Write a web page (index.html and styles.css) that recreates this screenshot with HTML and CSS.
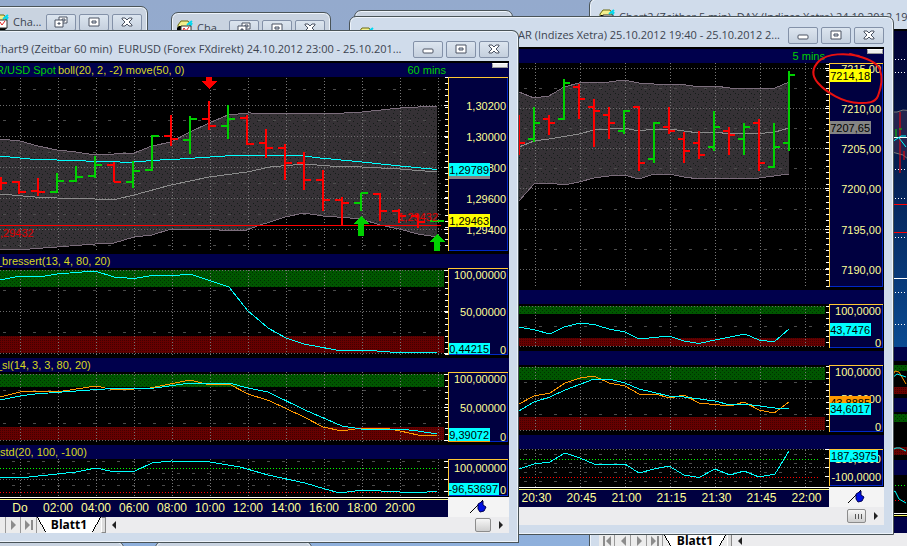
FILE: index.html
```html
<!DOCTYPE html>
<html lang="de"><head><meta charset="utf-8">
<meta name="viewport" content="initial-scale=1.0, width=device-width">
<title>Charts</title>
<link rel="stylesheet" href="styles.css">
</head>
<body>

<!-- shared patterns and icons -->
<svg class="defs" width="0" height="0" aria-hidden="true">
  <defs>
    <pattern id="cols60" x="20" y="0" width="38" height="3" patternUnits="userSpaceOnUse"><rect width="1" height="1" fill="#777"/></pattern>
    <pattern id="cols5" x="535" y="0" width="45" height="3" patternUnits="userSpaceOnUse"><rect width="1" height="1" fill="#777"/></pattern>
    <pattern id="band" width="8" height="8" patternUnits="userSpaceOnUse">
      <rect width="8" height="8" fill="#353135"/>
      <path d="M1 1h1v1h-1zM5 3h1v1h-1zM2 6h1v1h-1zM7 5h1v1h-1z" fill="#141c18"/>
    </pattern>
    <pattern id="high" width="4" height="4" patternUnits="userSpaceOnUse">
      <rect width="4" height="4" fill="#005600"/>
      <path d="M0 0h1v1h-1zM2 2h1v1h-1z" fill="#003000"/>
    </pattern>
    <pattern id="low" width="2" height="2" patternUnits="userSpaceOnUse">
      <rect width="2" height="2" fill="#660000"/>
      <path d="M0 0h1v1h-1z" fill="#420000"/>
    </pattern>
    <symbol id="i-chart" viewBox="0 0 16 16">
      <path d="M1 5L4 1h7l2 3v6H1z" fill="#f4f08c" stroke="#6b6b10"/>
      <path d="M10 5l5-4M12 8l3-5" stroke="#00d8f0" stroke-width="2"/>
      <path d="M2 6h12v8l-2 2H0V8z" fill="#000"/>
      <path d="M4 6h10v8H4z" fill="#fff" stroke="#333"/>
      <path d="M5 12l2-4 2 3 3-4" fill="none" stroke="#e02020"/>
    </symbol>
    <symbol id="i-min" viewBox="0 0 14 12"><rect x="2" y="6" width="10" height="4" rx="1" fill="#fff" stroke="#4a5262"/></symbol>
    <symbol id="i-max" viewBox="0 0 14 12"><path d="M2 2h10v8H2zM5 5v2h4V5z" fill="#fff" fill-rule="evenodd" stroke="#4a5262"/></symbol>
    <symbol id="i-restore" viewBox="0 0 14 12">
      <path d="M5 1h8v6H5zM8 3v2h3V3z" fill="#fff" fill-rule="evenodd" stroke="#4a5262"/>
      <path d="M1 4h8v7H1zM4 7v1h2V7z" fill="#fff" fill-rule="evenodd" stroke="#4a5262"/>
    </symbol>
    <symbol id="i-close" viewBox="0 0 14 12"><path d="M2 2h3l2 2 2-2h3v1L9 6l3 3v1H9L7 8l-2 2H2V9l3-3-3-3z" fill="#fff" stroke="#4a5262"/></symbol>
    <symbol id="i-next" viewBox="0 0 10 12"><path d="M3 1v10l5-5z" fill="#8c8c8c"/></symbol>
    <symbol id="i-prev" viewBox="0 0 10 12"><path d="M8 1v10L3 6z" fill="#8c8c8c"/></symbol>
    <symbol id="i-last" viewBox="0 0 10 12"><path d="M1 1v10l5-5zM7 1h2v10H7z" fill="#8c8c8c"/></symbol>
    <symbol id="i-first" viewBox="0 0 10 12"><path d="M9 1v10L4 6zM1 1h2v10H1z" fill="#8c8c8c"/></symbol>
    <symbol id="i-left" viewBox="0 0 6 8"><path d="M5 0v8L1 4z" fill="#222"/></symbol>
    <symbol id="i-right" viewBox="0 0 6 8"><path d="M1 0v8l4-4z" fill="#222"/></symbol>
    <symbol id="i-pin" viewBox="0 0 17 14">
      <path d="M0 13L13 0" stroke="#000" fill="none"/>
      <path d="M8 4l5-3v4l3 2-2 4-4 1-2-3z" fill="#0010e0" stroke="#000050"/>
    </symbol>
  </defs>
</svg>

<main class="desktop">

<!-- DAX window, behind everything -->
<section class="window w-dax">
  <header class="titlebar">
    <svg class="icon"><use href="#i-chart"/></svg>
    <h2>Chart2 (Zeitbar 5 min)&nbsp; DAX (Indizes Xetra) 24.10.2012 19:00 - 25.10.2012 22:00</h2>
  </header>
  <div class="content dax-content">
    <svg width="21" height="502" viewBox="893 31 21 502">
      <defs><linearGradient id="deep" x1="0" y1="0" x2="0" y2="1">
        <stop offset="0" stop-color="#000034"/><stop offset="0.35" stop-color="#041848"/><stop offset="1" stop-color="#0a4a92"/>
      </linearGradient></defs>
      <rect x="893" y="31" width="21" height="316" fill="url(#deep)"/>
      <path d="M893 112l5 0 6-2 10 1v52l-10-8-11-3z" fill="#24244e" stroke="#777"/>
      <path class="dots white" d="M893 59.5h21M893 72.5h21M893 169.5h21M893 198.5h21M893 237.5h21M893 292.5h21M893 324.5h21"/>
      <path class="line red" d="M893 204.500h21M893 232.500h21"/>
      <path class="bars red" d="M901 112V173M905 151V160"/>
      <path class="bars green" d="M897 129V138M900 129H903"/>
      <path class="line white" d="M893 137.500h21M893 278.500h21"/>
      <path class="line cyan" d="M893 142l9-6 5 0M900 138l7 9"/>
      <rect x="893" y="347" width="21" height="14" fill="#000048"/>
      <rect x="893" y="365" width="21" height="6" fill="url(#high)"/>
      <rect x="893" y="387" width="21" height="7" fill="url(#low)"/>
      <path class="line orange" d="M893 377l3-6 4 1 7 12"/>
      <path class="line cyan" d="M893 378l5-4 9 3"/>
      <rect x="893" y="398" width="21" height="14" fill="#000048"/>
      <rect x="893" y="414" width="21" height="8" fill="url(#high)"/>
      <rect x="893" y="447" width="21" height="8" fill="url(#low)"/>
      <path class="line cyan" d="M893 450l4-2 4 0 6 3"/>
      <rect x="893" y="460" width="21" height="15" fill="#000048"/>
      <path class="dots lime" d="M893 485.500h21"/>
      <path class="dots crimson" d="M893 500.500h21"/>
      <path class="line cyan" d="M893 493l3-2 4 8 7 4"/>
      <path class="line white" d="M893 513.500h21"/>
      <path class="line yellow" d="M893 515.500h21"/>
      <rect x="893" y="517" width="21" height="16" fill="#000048"/>
    </svg>
  </div>
  <div class="tabs">
    <button type="button" class="nav" aria-label="Erstes"><svg><use href="#i-first"/></svg></button>
    <button type="button" class="nav" aria-label="Zurück"><svg><use href="#i-prev"/></svg></button>
    <button type="button" class="nav" aria-label="Weiter"><svg><use href="#i-next"/></svg></button>
    <button type="button" class="nav" aria-label="Letztes"><svg><use href="#i-last"/></svg></button>
    <button type="button" class="tab">Blatt1</button>
    <span class="splitter"></span>
    <div class="track"><svg class="arrow"><use href="#i-left"/></svg></div>
  </div>
</section>

<!-- small windows along the top and bottom -->
<section class="window mini w-one">
  <header class="titlebar">
    <svg class="icon"><use href="#i-chart"/></svg>
    <h2>Cha...</h2>
    <div class="controls">
      <button type="button" aria-label="Wiederherstellen"><svg><use href="#i-restore"/></svg></button>
      <button type="button" aria-label="Maximieren"><svg><use href="#i-max"/></svg></button>
      <button type="button" aria-label="Schließen"><svg><use href="#i-close"/></svg></button>
    </div>
  </header>
</section>
<section class="window mini w-two">
  <header class="titlebar">
    <svg class="icon"><use href="#i-chart"/></svg>
    <h2>Cha...</h2>
    <div class="controls">
      <button type="button" aria-label="Wiederherstellen"><svg><use href="#i-restore"/></svg></button>
      <button type="button" aria-label="Maximieren"><svg><use href="#i-max"/></svg></button>
      <button type="button" aria-label="Schließen"><svg><use href="#i-close"/></svg></button>
    </div>
  </header>
</section>
<section class="window mini w-three"></section>
<section class="window mini w-four"></section>
<section class="window mini w-five"></section>

<!-- DOLLAR, 5 min -->
<section class="window w-five-min">
  <header class="titlebar">
    <svg class="icon"><use href="#i-chart"/></svg>
    <h2>LAR (Indizes Xetra) 25.10.2012 19:40 - 25.10.2012 2...</h2>
    <div class="controls">
      <button type="button" aria-label="Minimieren"><svg><use href="#i-min"/></svg></button>
      <button type="button" aria-label="Maximieren"><svg><use href="#i-max"/></svg></button>
      <button type="button" aria-label="Schließen"><svg><use href="#i-close"/></svg></button>
    </div>
  </header>
  <div class="content">
    <div class="pane-head"><span class="period">5 mins</span><span class="grip"></span></div>
    <svg class="pane" width="526" height="224" viewBox="358 63 526 224">
      <path d="M504 90L519 92 534 98 549 96 564 87 579 83 609 82 624 80 639 83 654 84 680 84 699 87 715 86 730 88 775 88 789 82V174L759 178 715 178 699 179 684 177 669 174 654 174 639 179 624 175 609 176 594 178 579 182 564 185 549 183 534 184 519 201 504 210z" fill="url(#band)"/>
      <rect x="358" y="63" width="467" height="224" fill="url(#cols5)"/>
      <path class="dots" d="M358 68.500H825M358 108.500H825M358 148.500H825M358 188.500H825M358 229.500H825M358 269.500H825"/>
      <path class="dashes" d="M524 88.500H825M524 128.500H825M524 168.500H825M524 209.500H825M524 249.500H825"/>
      <path class="edge" d="M504 90L519 92 534 98 549 96 564 87 579 83 609 82 624 80 639 83 654 84 680 84 699 87 715 86 730 88 775 88 789 82M519 201L534 184 549 183 564 185 579 182 594 178 609 176 624 175 639 179 654 174 669 174 684 177 699 179 715 178 759 178 789 174"/>
      <path class="line grey" d="M519 147L534 141 549 139 579 134 594 130 624 128 639 131 654 129 669 129 699 133 715 132 730 134 765 133 775 132 789 128"/>
      <path class="bars red" d="M519 115V155M519 143H525M549 115V135M543 119H549M549 123H555M579 84V119M573 87H579M579 99H585M594 99V147M588 107H594M594 111H600M609 107V139M603 115H609M609 123H615M639 106V171M633 107H639M639 163H645M669 107V134M663 127H669M669 131H675M684 132V163M678 139H684M684 151H690M699 131V159M693 143H699M699 155H705M729 127V155M723 131H729M729 135H735M759 119V171M753 123H759M759 163H765"/>
      <path class="bars green" d="M534 107V142M528 139H534M534 123H540M564 79V120M558 119H564M564 83H570M624 110V134M618 131H624M624 111H630M654 122V163M648 159H654M654 123H660M714 111V151M708 147H714M714 127H720M744 123V155M738 139H744M744 127H750M774 123V168M768 167H774M774 147H780M789 71V151M783 143H789M789 75H795"/>
      <path class="ticks" d="M827.500 64V287"/>
      <path class="line white" d="M825 68.500h4M825 108.500h4M825 148.500h4M825 188.500h4M825 229.500h4M825 269.500h4"/>
      <rect class="scale" x="829" y="63" width="54" height="224"/>
      <path class="scale-b" d="M829 286.500H882.500V64"/><path class="scale-a" d="M829.500 287V63.500H883"/>
      <g class="values">
        <text x="881" y="73">7215,00</text><text x="881" y="113">7210,00</text><text x="881" y="153">7205,00</text>
        <text x="881" y="193">7200,00</text><text x="881" y="234">7195,00</text><text x="881" y="274">7190,00</text>
      </g>
      <rect x="830" y="69" width="41" height="13" fill="#ff0"/><text class="badge" x="870" y="80">7214,18</text>
      <rect x="830" y="121" width="41" height="13" fill="#848484"/><text class="badge" x="870" y="132">7207,65</text>
    </svg>

    <div class="pane-head"></div>
    <svg class="pane" width="526" height="44" viewBox="358 304 526 44">
      <rect x="358" y="306" width="467" height="8" fill="url(#high)"/>
      <rect x="358" y="338" width="467" height="8" fill="url(#low)"/>
      <rect x="358" y="304" width="467" height="44" fill="url(#cols5)"/>
      <path class="dots" d="M358 306.500H825M358 346.500H825"/>
      <path class="dashes" d="M524 326.500H825"/>
      <path class="line cyan" d="M519 327L535 330 550 334 564 327 580 323 594 324.500 609 329 625 332 639 339 669 336 684 341 699 343.500 715 340 745 334 759 340 774 342 789 329"/>
      <path class="ticks" d="M827.500 306V348"/>
      <rect class="scale" x="829" y="304" width="54" height="44"/>
      <path class="scale-b" d="M829 347.500H882.500V304"/><path class="scale-a" d="M829.500 348V304.500H883"/>
      <g class="values"><text x="881" y="315">100,0000</text><text x="881" y="347">0</text></g>
      <rect x="830" y="323" width="41" height="13" fill="#0ff"/><text class="badge" x="870" y="334">43,7476</text>
    </svg>

    <div class="pane-head"></div>
    <svg class="pane" width="526" height="67" viewBox="358 365 526 67">
      <rect x="358" y="367" width="467" height="13" fill="url(#high)"/>
      <rect x="358" y="417" width="467" height="13" fill="url(#low)"/>
      <rect x="358" y="365" width="467" height="67" fill="url(#cols5)"/>
      <path class="dots" d="M358 367.500H825M358 398.500H825M358 430.500H825"/>
      <path class="dashes" d="M524 382.500H825M524 414.500H825"/>
      <path class="line orange" d="M519 404L534 396 550 393 565 383 580 378 594 376 609 383 625 386 639 394 655 394 670 398 684 395 699 403 730 406 744 402 759 410 774 413 789 402"/>
      <path class="line cyan" d="M519 411L534 402 550 397 565 390 594 379 609 379 625 383 639 389 669 396 684 397 715 401 730 405 744 404 775 408 789 408.500"/>
      <path class="ticks" d="M827.500 366V432"/>
      <rect class="scale" x="829" y="365" width="54" height="67"/>
      <path class="scale-b" d="M829 431.500H882.500V365"/><path class="scale-a" d="M829.500 432V365.500H883"/>
      <g class="values"><text x="881" y="376">100,0000</text><text x="881" y="403">50,0000</text><text x="881" y="431">0</text></g>
      <rect x="830" y="396" width="41" height="13" fill="#f90"/><text class="badge" x="870" y="407">43,8885</text>
      <rect x="830" y="403" width="41" height="12" fill="#0ff"/><text class="badge" x="870" y="413">34,6017</text>
    </svg>

    <div class="pane-head"></div>
    <svg class="pane" width="526" height="38" viewBox="358 449 526 38">
      <rect x="358" y="449" width="467" height="38" fill="url(#cols5)"/>
      <path class="dots" d="M358 449.500H825M358 467.500H825"/>
      <path class="dashes" d="M524 454.500H825M524 463.500H825M524 472.500H825M524 481.500H825"/>
      <path class="dots lime" d="M358 459.500H820"/><path class="dots crimson" d="M358 477.500H820"/>
      <path class="line cyan" d="M519 469L534 464 550 462 565 453 580 458 594 464 625 464 639 473 654 469 669 466 684 475 699 477.500 715 469 730 475 744 471 759 477 775 474 789 451"/>
      <path class="line white" d="M825 449.500h4M825 458.500h4M825 467.500h4M825 476.500h4"/>
      <rect class="scale" x="829" y="449" width="54" height="37"/>
      <path class="scale-b" d="M829 485.500H882.500V449"/><path class="scale-a" d="M829.500 486V449.500H883"/>
      <g class="values"><text x="881" y="463">100,0000</text><text x="881" y="481">-100,0000</text></g>
      <rect x="830" y="450" width="48" height="12" fill="#0ff"/><text class="badge" x="877" y="460">187,3975</text>
    </svg>

    <div class="axis">
      <div class="times step-45"><span>20:30</span><span>20:45</span><span>21:00</span><span>21:15</span><span>21:30</span><span>21:45</span><span>22:00</span></div>
      <div class="corner"><svg class="pin"><use href="#i-pin"/></svg></div>
    </div>
    <div class="tabs scroll">
      <div class="track"><span class="thumb ribbed"></span><svg class="arrow"><use href="#i-right"/></svg></div>
    </div>
  </div>
</section>

<!-- EURUSD, 60 min -->
<section class="window w-hour">
  <header class="titlebar">
    <h2>Chart9 (Zeitbar 60 min)&nbsp; EURUSD (Forex FXdirekt) 24.10.2012 23:00 - 25.10.201...</h2>
    <div class="controls">
      <button type="button" aria-label="Minimieren"><svg><use href="#i-min"/></svg></button>
      <button type="button" aria-label="Maximieren"><svg><use href="#i-max"/></svg></button>
      <button type="button" aria-label="Schließen"><svg><use href="#i-close"/></svg></button>
    </div>
  </header>
  <div class="content">
    <div class="pane-head"><span class="symbol cut">R/USD Spot</span><span>boll(20, 2, -2) move(50, 0)</span><span class="period">60 mins</span><span class="grip"></span></div>
    <svg class="pane" width="509" height="174" viewBox="0 77 509 174">
      <path d="M0 139L20 141 38 146 57 150 76 152 95 155 134 153 152 146 171 142 190 132 209 123 228 115 248 113 335 113.500 362 112 400 108 437 106V237L418 234 399 229 380 225 361 219 350 218 323 216 304 213 285 217 270 222 260 225 247 230 228 231 210 229 171 229 152 235 134 237 114 243 95 244 57 247 30 249 0 249z" fill="url(#band)"/>
      <rect x="0" y="77" width="444" height="174" fill="url(#cols60)"/>
      <path class="dots" d="M0 105.500H444M0 136.500H444M0 167.500H444M0 198.500H444M0 229.500H444"/>
      <path class="dashes" d="M3 89.500H444M3 120.500H444M3 152.500H444M3 183.500H444M3 214.500H444M3 245.500H444"/>
      <path class="edge" d="M0 139L20 141 38 146 57 150 76 152 95 155 134 153 152 146 171 142 190 132 209 123 228 115 248 113 335 113.500 362 112 400 108 437 106M437 237L418 234 399 229 380 225 361 219 350 218 323 216 304 213 285 217 270 222 260 225 247 230 228 231 210 229 171 229 152 235 134 237 114 243 95 244 57 247 30 249 0 249"/>
      <path class="line grey" d="M0 194L35 197 57 198 95 199 117 199 134 195 171 185 209 177 247 172 270 167 304 164 330 166 362 167 400 169 437 172"/>
      <path class="line cyan" d="M0 156L30 159 57 160 86 161 120 162 133 162 160 160 180 159 210 157 240 155 295 155 320 158 362 162 400 166 437 169.500"/>
      <path class="bars red" d="M1 177V190M1 183H7M19 181V194M12 182H19M19 192H26M38 178V196M31 191H38M38 192H45M114 162V182M107 165H114M114 182H121M171 115V146M164 136H171M171 139H178M209 101V130M202 119H209M209 126H216M247 115V145M240 118H247M247 144H254M266 129V158M259 143H266M266 148H273M285 144V180M278 148H285M285 163H292M304 152V190M297 163H304M304 180H311M323 170V211M316 180H323M323 200H330M342 197V225M335 200H342M342 203H349M380 193V221M373 194H380M380 211H387M399 209V223M392 211H399M399 216H406M418 214V228M411 216H418M418 222H425"/>
      <path class="bars green" d="M57 173V193M50 192H57M57 181H64M76 166V182M69 181H76M76 177H83M95 156V178M88 176H95M95 165H102M133 161V188M126 182H133M133 171H140M152 135V171M145 170H152M152 136H159M190 116V154M183 140H190M190 119H197M228 105V139M221 126H228M228 119H235M361 193V211M354 203H361M361 193H368M430 221H444"/>
      <path class="line red" d="M0 225.500H441"/>
      <text class="mark" x="0" y="237">,29432</text><text class="mark end" x="438" y="221">1,29432</text>
      <path d="M206 77h6v4h5l-8 8-8-8h5z" fill="#f00"/>
      <path d="M361 216l8 8h-5v12h-6v-12h-5zM437 234l8 8h-5v9h-6v-9h-5z" fill="#00d000"/>
      <path class="ticks" d="M446.500 77V251"/>
      <path class="line white" d="M444 105.500h4M444 136.500h4M444 167.500h4M444 198.500h4M444 229.500h4"/>
      <rect class="scale" x="448" y="77" width="60" height="174"/>
      <path class="scale-b" d="M448 250.500H507.500V77"/><path class="scale-a" d="M448.500 251V77.500H508"/>
      <g class="values">
        <text x="506" y="110">1,30200</text><text x="506" y="141">1,30000</text><text x="506" y="172">1,29800</text>
        <text x="506" y="203">1,29600</text><text x="506" y="234">1,29400</text>
      </g>
      <rect x="449" y="166" width="41" height="13" fill="#848484"/>
      <rect x="449" y="163" width="41" height="13" fill="#0ff"/><text class="badge" x="489" y="174">1,29789</text>
      <rect x="449" y="214" width="41" height="13" fill="#ff0"/><text class="badge" x="489" y="225">1,29463</text>
    </svg>

    <div class="pane-head"><span class="cut">_bressert(13, 4, 80, 20)</span></div>
    <svg class="pane" width="509" height="87" viewBox="0 268 509 87">
      <rect x="0" y="270" width="444" height="17" fill="url(#high)"/>
      <rect x="0" y="336" width="444" height="17" fill="url(#low)"/>
      <rect x="0" y="268" width="444" height="87" fill="url(#cols60)"/>
      <path class="dots" d="M0 270.500H444M0 311.500H444M0 353.500H444"/>
      <path class="dashes" d="M3 290.500H444M3 332.500H444"/>
      <path class="line cyan" d="M0 280L20 276 45 276 57 274 95 271 114 277 134 278.500 152 275.500 171 276 190 274 229 287 248 311 260 321 268 328 286 338 304 344 339 350.500 370 350.500 390 352 430 352 437 353"/>
      <path class="ticks" d="M446.500 270V355"/>
      <path class="line white" d="M444 270.500h4M444 311.500h4M444 353.500h4"/>
      <rect class="scale" x="448" y="268" width="60" height="87"/>
      <path class="scale-b" d="M448 354.500H507.500V268"/><path class="scale-a" d="M448.500 355V268.500H508"/>
      <g class="values"><text x="506" y="279">100,00000</text><text x="506" y="316">50,00000</text><text x="506" y="354">0</text></g>
      <rect x="449" y="343" width="41" height="11" fill="#0ff"/><text class="badge" x="489" y="353">0,44215</text>
    </svg>

    <div class="pane-head"><span class="cut">_sl(14, 3, 3, 80, 20)</span></div>
    <svg class="pane" width="509" height="70" viewBox="0 372 509 70">
      <rect x="0" y="374" width="444" height="13" fill="url(#high)"/>
      <rect x="0" y="427" width="444" height="13" fill="url(#low)"/>
      <rect x="0" y="372" width="444" height="70" fill="url(#cols60)"/>
      <path class="dots" d="M0 374.500H444M0 407.500H444M0 440.500H444"/>
      <path class="dashes" d="M3 390.500H444M3 423.500H444"/>
      <path class="line orange" d="M0 397L20 392 34 391 57 392 96 386 110 389 134 389 150 388 190 380 210 385 229 384 248 394 270 401 304 417 323 427 342 431 361 428 385 428 400 431 418 435 437 436"/>
      <path class="line cyan" d="M0 400L20 396 35 394 76 391 105 389 155 388 190 383 229 383 248 388 268 392 305 410 342 426 361 429 400 429 418 431 437 434"/>
      <path class="ticks" d="M446.500 374V442"/>
      <path class="line white" d="M444 374.500h4M444 407.500h4M444 440.500h4"/>
      <rect class="scale" x="448" y="372" width="60" height="70"/>
      <path class="scale-b" d="M448 441.500H507.500V372"/><path class="scale-a" d="M448.500 442V372.500H508"/>
      <g class="values"><text x="506" y="383">100,00000</text><text x="506" y="412">50,00000</text><text x="506" y="441">0</text></g>
      <rect x="449" y="430" width="41" height="12" fill="#f90"/>
      <rect x="449" y="428" width="41" height="13" fill="#0ff"/><text class="badge" x="489" y="439">9,39072</text>
    </svg>

    <div class="pane-head"><span>std(20, 100, -100)</span></div>
    <svg class="pane" width="509" height="38" viewBox="0 459 509 38">
      <rect x="0" y="459" width="444" height="38" fill="url(#cols60)"/>
      <path class="dots" d="M0 479.500H444"/>
      <path class="dashes" d="M12 461.500H444M12 473.500H444M12 485.500H444"/>
      <path class="dots lime" d="M0 468.500H438"/><path class="dots crimson" d="M0 492.500H438"/>
      <path class="line cyan" d="M0 477L20 478 57 474 76 472 96 468 110 471 135 471 152 463 171 461 210 462 240 467 268 475 305 483 325 489 340 493 362 490 400 492 418 493 437 491"/>
      <path class="line white" d="M444 461.500h4M444 467.500h4M444 479.500h4M444 491.500h4"/>
      <rect class="scale" x="448" y="459" width="60" height="37"/>
      <path class="scale-b" d="M448 495.500H507.500V459"/><path class="scale-a" d="M448.500 496V459.500H508"/>
      <g class="values"><text x="506" y="472">100,00000</text><text x="506" y="494">0</text></g>
      <rect x="449" y="483" width="50" height="12" fill="#0ff"/><text class="badge" x="498" y="493">-96,53697</text>
    </svg>

    <div class="axis">
      <div class="times step-38"><span>Do</span><span>02:00</span><span>04:00</span><span>06:00</span><span>08:00</span><span>10:00</span><span>12:00</span><span>14:00</span><span>16:00</span><span>18:00</span><span>20:00</span></div>
      <div class="corner"><svg class="pin"><use href="#i-pin"/></svg></div>
    </div>
    <div class="tabs">
      <button type="button" class="nav" aria-label="Weiter"><svg><use href="#i-next"/></svg></button>
      <button type="button" class="nav" aria-label="Letztes"><svg><use href="#i-last"/></svg></button>
      <button type="button" class="tab">Blatt1</button>
      <span class="splitter"></span>
      <div class="track"><svg class="arrow"><use href="#i-left"/></svg><span class="thumb"></span><svg class="arrow"><use href="#i-right"/></svg></div>
    </div>
  </div>
</section>

<!-- hand-drawn circle round the last price -->
<svg class="marker" width="80" height="60" viewBox="806 48 80 60" aria-hidden="true">
  <path d="M859 56C846 53 828 53 819 61C812 68 811 75 818 83C826 92 843 103 859 103C868 103 875 103 878 96C881 88 883 78 880 70C877 61 865 58 850 54"/>
</svg>

</main>
</body>
</html>
```
FILE: styles.css
```css
html,body,h2{margin:0;padding:0;}
*{box-sizing:border-box;}
body{
  font-family:"Liberation Sans",Arial,sans-serif;
  font-size:11px;
  background:#96acce;
}
button{font-family:inherit;padding:0;border:0;}
svg{display:block;flex:none;}
.defs{position:absolute;}
.desktop{
  position:relative;
  height:100vh;
  overflow:hidden;
  background:linear-gradient(#94aacd,#8fb0dc);
}

/* windows */
.window{
  position:absolute;
  padding:0 9px 9px;
  background:#d0dceb;
  border:1px solid #4a5458;
  border-width:1px 1px 1px 0;
  border-radius:7px 7px 0 0;
  box-shadow:inset 0 0 0 1px #eef4fb;
}
.titlebar{
  display:flex;
  align-items:center;
  gap:4px;
  height:30px;
  padding-top:6px;
}
.titlebar h2{
  flex:1;
  min-width:0;
  white-space:nowrap;
  font:11px/16px "Open Sans","Noto Sans",sans-serif;
  color:#3c4450;
}
.icon{width:16px;height:16px;}
.controls{display:flex;gap:3px;}
.controls button{
  display:flex;
  align-items:center;
  justify-content:center;
  width:30px;
  height:17px;
  border:1px solid #8391a8;
  border-radius:2px;
  background:linear-gradient(#dce5ef,#c5d0de);
}
.controls svg{width:14px;height:12px;}
.mini{height:60px;padding:0 5px;border-left-width:1px;background:#c9d3e0;}
.mini .titlebar{height:26px;padding-top:4px;}

.w-dax{left:589px;top:-2px;width:340px;border-left-width:1px;}
.dax-content{display:flex;justify-content:flex-end;padding-right:6px;}
.w-one{left:-13px;top:6px;width:161px;}
.w-two{left:171px;top:12px;width:160px;}
.w-three{left:354px;top:10px;width:159px;}
.w-four{left:-30px;top:541px;width:154px;}
.w-five{left:155px;top:541px;width:157px;}
.w-five-min{left:349px;top:16px;width:545px;border-left-width:1px;padding-left:8px;}
.w-five-min h2{display:flex;justify-content:flex-end;}
.w-hour{left:-9px;top:30px;width:528px;}
.w-hour h2{margin-left:-6px;}
.w-five-min h2,.w-hour h2{padding-right:4px;}

/* charts */
.content{background:#000;border-top:2px solid #000;}
.pane-head{
  display:flex;
  align-items:center;
  gap:2px;
  height:14px;
  margin-top:3px;
  background:#00004c;
  color:#d8d820;
  font-size:11px;
  line-height:14px;
  white-space:nowrap;
}
.pane-head:first-child{margin-top:0;}
.cut{margin-left:-4px;}
.symbol,.period{color:#00d000;}
.period{margin-left:auto;}
.grip{
  align-self:flex-start;
  width:16px;
  height:5px;
  margin:0 1px 0 44px;
  background:#eee;
  border:1px solid #999;
  border-top-color:#fff;
}
.w-five-min .grip{margin-left:40px;}
.pane{shape-rendering:crispEdges;}
.pane path{stroke-width:1;}
.dots{stroke:#6a6a6a;stroke-dasharray:1 2;fill:none;}
.dashes{stroke:#4c4c4c;stroke-dasharray:3 12;fill:none;}
.edge{stroke:#7c6e7c;fill:none;}
.line{fill:none;}
.pane .bars{stroke-width:2;fill:none;}
.red{stroke:#f00;}
.green{stroke:#00d000;}
.cyan{stroke:#0ff;}
.orange{stroke:#f90;}
.grey{stroke:#8c8c8c;}
.white{stroke:#fff;}
.yellow{stroke:#ffff70;}
.lime{stroke:#0f0;}
.crimson{stroke:#f00;}
.ticks{stroke:#fff;stroke-dasharray:1 5;fill:none;}
.pane .ticks{stroke-width:3;}
.scale{fill:#000040;}
.scale-a{stroke:#ffc832;fill:none;}
.scale-b{stroke:#0028c8;fill:none;}
.values text{fill:#ffff96;text-anchor:end;}
.badge{fill:#000;text-anchor:end;}
.mark{fill:#e00000;}
.end{text-anchor:end;}

/* time axis */
.axis{display:flex;height:20px;}
.times{
  display:flex;
  flex:1;
  justify-content:flex-end;
  padding-top:3px;
  background:linear-gradient(#fff 1px,#000 1px,#000 2px,#ffff80 2px,#ffff80 3px,#000040 3px);
  color:#ffff96;
  font-size:12px;
  line-height:16px;
  text-align:center;
}
.step-38{justify-content:flex-start;padding-left:1px;}
.step-38 span{width:38px;}
.step-45 span{width:45px;}
.corner{
  display:flex;
  align-items:center;
  justify-content:center;
  width:61px;
  background:#f4f4f4;
}
.w-five-min .corner{width:55px;}
.pin{width:17px;height:14px;}

/* sheet tabs and scroll bar */
.tabs{display:flex;height:16px;background:#ececec;}
.nav{
  width:16px;
  height:16px;
  background:#ececec;
  border-right:1px solid #999;
}
.nav svg{width:10px;height:12px;margin:0 auto;}
.w-hour .nav:first-child{margin-left:5px;border-left:1px solid #999;}
.tab{
  width:64px;
  height:16px;
  background:linear-gradient(to top right,transparent 49%,#000 49%,#000 54%,#fff 54%) 0 0/9px 100% no-repeat,
    linear-gradient(to top left,transparent 49%,#000 49%,#000 54%,#fff 54%) 100% 0/9px 100% no-repeat,
    linear-gradient(#fff,#fff) 50% 0/46px 100% no-repeat;
  font:bold 12px/14px "Open Sans","Noto Sans",sans-serif;
  color:#000;
}
.splitter{width:5px;border:1px solid #888;border-left-color:#fff;background:#ddd;}
.track{
  display:flex;
  flex:1;
  align-items:center;
  padding:0 5px;
  background:#ececee;
}
.arrow{width:6px;height:8px;}
.thumb{
  width:16px;
  height:14px;
  margin:0 7px 0 auto;
  border:1px solid #8c8c8c;
  border-radius:2px;
  background:linear-gradient(#f6f6f6,#cfcfcf);
}
.scroll{height:18px;}
.ribbed{
  width:19px;
  background:repeating-linear-gradient(90deg,transparent 0 2px,#555 2px 3px) 5px 4px/9px 5px no-repeat,linear-gradient(#f6f6f6,#cfcfcf);
}

.marker{
  position:absolute;
  left:806px;
  top:48px;
  fill:none;
  stroke:#e81010;
  stroke-width:2;
  stroke-linecap:round;
}
```
